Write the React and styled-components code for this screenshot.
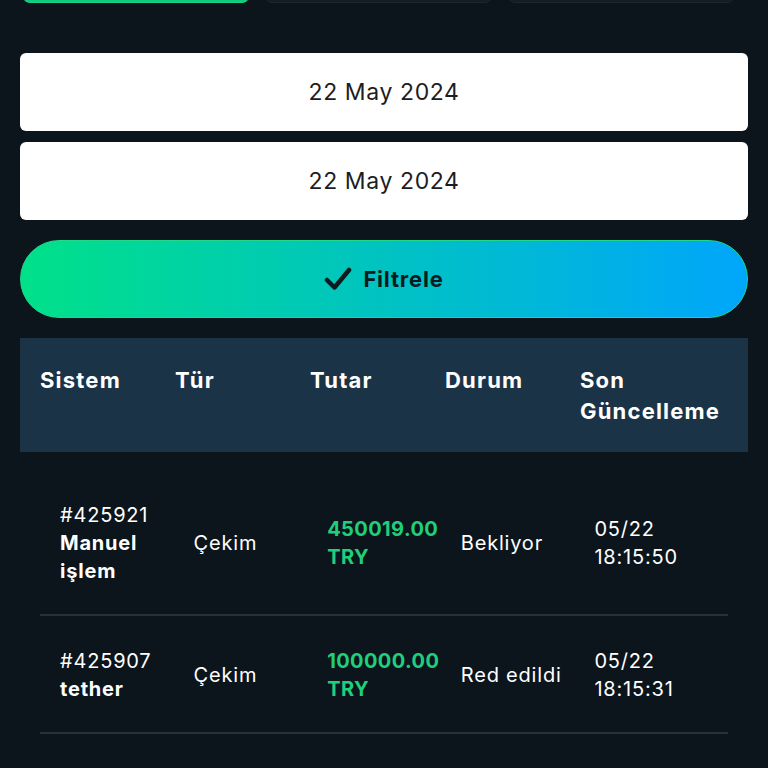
import styled, { createGlobalStyle } from "styled-components";

const GlobalStyle = createGlobalStyle`
  html, body {
    margin: 0;
    padding: 0;
    background: #0b151b;
  }
  body {
    font-family: Inter, "Open Sans", "DejaVu Sans", sans-serif;
    color: #ffffff;
  }
  * { box-sizing: border-box; }
`;

const Page = styled.div`
  width: 768px;
  height: 768px;
  overflow: hidden;
  padding: 0 20px;
`;

const Tabs = styled.div`
  display: flex;
  gap: 14px;
  margin: -37px 13px 0 2px;
  height: 40px;
`;

const Tab = styled.div`
  flex: 1;
  border-radius: 8px;
  background: ${(p) => (p.$active ? "#12c97f" : "#131d24")};
  border: 1px solid ${(p) => (p.$active ? "#18d688" : "#1b262e")};
`;

const Form = styled.div`
  display: flex;
  flex-direction: column;
  gap: 11px;
  margin-top: 50px;
`;

const DateField = styled.div`
  height: 78px;
  background: #ffffff;
  border-radius: 6px;
  display: flex;
  align-items: center;
  justify-content: center;
  color: #1d1d1f;
  font-size: 23px;
  letter-spacing: 0.6px;
`;

const FilterButton = styled.button`
  margin-top: 9px;
  height: 78px;
  border-radius: 40px;
  border: 1px solid #1fd98a;
  background: linear-gradient(90deg, #00e189 0%, #00c3c2 50%, #00a6fb 100%);
  display: flex;
  align-items: center;
  justify-content: center;
  gap: 11px;
  font-family: inherit;
  font-size: 22px;
  font-weight: 700;
  letter-spacing: 0.8px;
  color: #0d1a20;
  cursor: pointer;
`;

const Table = styled.div`
  margin-top: 20px;
`;

const Head = styled.div`
  background: #1b3347;
  display: grid;
  grid-template-columns: repeat(5, 135px);
  padding: 27px 20px 25px;
  font-size: 22px;
  font-weight: 700;
  letter-spacing: 1.2px;
  line-height: 31px;
`;

const HeadCell = styled.div``;

const Body = styled.div`
  margin: 18px 20px 0;
`;

const Row = styled.div`
  display: grid;
  grid-template-columns: repeat(5, 1fr);
  align-items: center;
  padding: 31px 0 29px 20px;
  border-bottom: 2px solid #283038;
  font-size: 20px;
  letter-spacing: 0.8px;
  line-height: 28px;
`;

const Cell = styled.div`
  padding-right: 8px;
`;

const Name = styled.div`
  font-weight: 700;
`;

const Amount = styled.div`
  color: #1fcf7c;
  font-weight: 700;
  letter-spacing: 0.4px;
`;

const Check = () => (
  <svg width="28" height="26" viewBox="0 0 28 26" fill="none">
    <path
      d="M3 14 L10.5 21.5 L25 4"
      stroke="#0d1a20"
      strokeWidth="4.5"
      strokeLinecap="round"
      strokeLinejoin="round"
    />
  </svg>
);

const rows = [
  {
    id: "#425921",
    name: "Manuel işlem",
    type: "Çekim",
    amount: "450019.00",
    status: "Bekliyor",
    date: "05/22",
    time: "18:15:50",
  },
  {
    id: "#425907",
    name: "tether",
    type: "Çekim",
    amount: "100000.00",
    status: "Red edildi",
    date: "05/22",
    time: "18:15:31",
  },
];

export default function App() {
  return (
    <Page>
      <GlobalStyle />
      <Tabs>
        <Tab $active />
        <Tab />
        <Tab />
      </Tabs>
      <Form>
        <DateField>22 May 2024</DateField>
        <DateField>22 May 2024</DateField>
        <FilterButton>
          <Check />
          Filtrele
        </FilterButton>
      </Form>
      <Table>
        <Head>
          <HeadCell>Sistem</HeadCell>
          <HeadCell>Tür</HeadCell>
          <HeadCell>Tutar</HeadCell>
          <HeadCell>Durum</HeadCell>
          <HeadCell>
            Son
            <br />
            Güncelleme
          </HeadCell>
        </Head>
        <Body>
          {rows.map((r) => (
            <Row key={r.id}>
              <Cell>
                {r.id}
                <Name>{r.name}</Name>
              </Cell>
              <Cell>{r.type}</Cell>
              <Cell>
                <Amount>
                  {r.amount}
                  <br />
                  TRY
                </Amount>
              </Cell>
              <Cell>{r.status}</Cell>
              <Cell>
                {r.date}
                <br />
                {r.time}
              </Cell>
            </Row>
          ))}
        </Body>
      </Table>
    </Page>
  );
}
